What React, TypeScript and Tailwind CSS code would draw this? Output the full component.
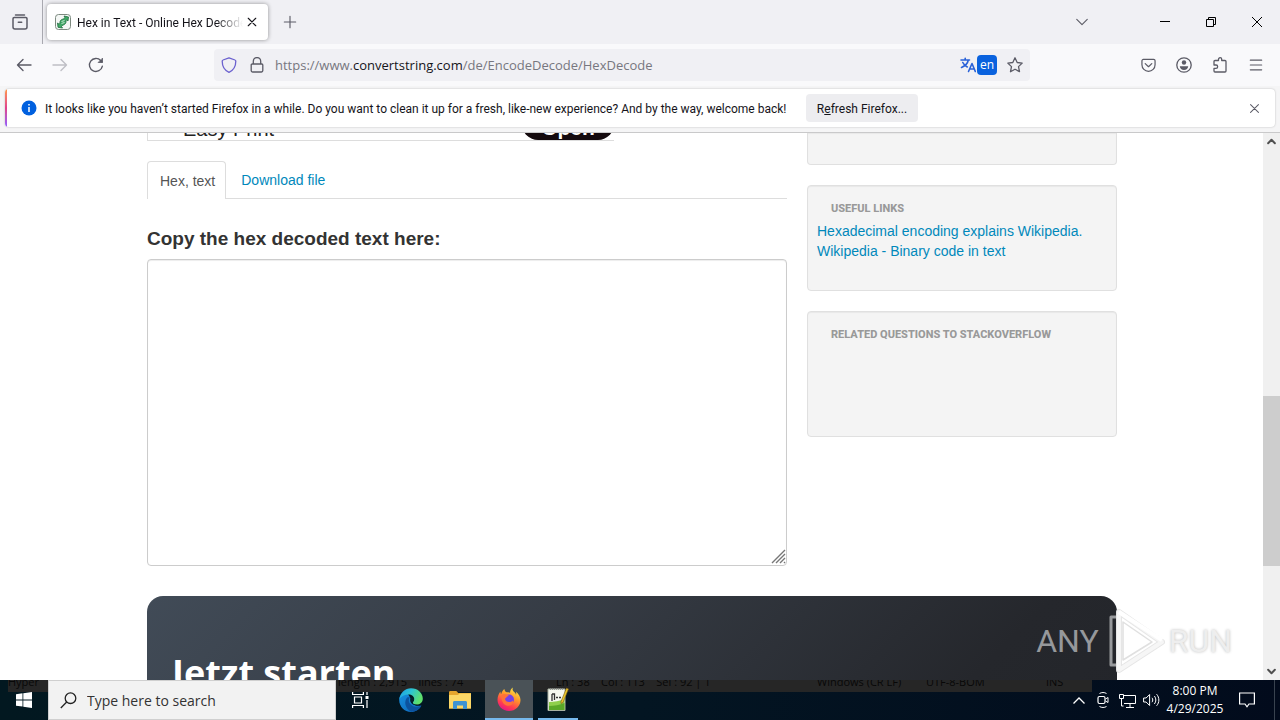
import type { ReactNode } from "react";

const links = [
  "Hexadecimal encoding explains Wikipedia.",
  "Wikipedia - Binary code in text",
];

function Stroke({ children, size = 16, width = 1.3, className = "" }: { children: ReactNode; size?: number; width?: number; className?: string }) {
  return (
    <svg width={size} height={size} viewBox="0 0 16 16" fill="none" stroke="currentColor" strokeWidth={width} strokeLinecap="round" strokeLinejoin="round" className={`shrink-0 ${className}`} aria-hidden="true">
      {children}
    </svg>
  );
}

function IconButton({ label, children, className = "" }: { label: string; children: ReactNode; className?: string }) {
  return (
    <button type="button" aria-label={label} className={`flex h-8 shrink-0 items-center justify-center ${className}`}>
      {children}
    </button>
  );
}

function TabStrip() {
  return (
    <div className="flex h-11 shrink-0 items-center bg-[#f0f0f4] text-[#5b5b66]">
      <IconButton label="Recent browsing" className="w-10">
        <Stroke size={16} width={1.500}>
          <path d="M3.500 1h9" />
          <path d="M2.200 3.500h11.600a1.200 1.200 0 0 1 1.200 1.200v8.300a2 2 0 0 1-2 2H3a2 2 0 0 1-2-2V4.700a1.200 1.200 0 0 1 1.200-1.200zM6.300 8.300h3.400" />
        </Stroke>
      </IconButton>
      <div className="ml-[2px] w-px self-stretch bg-[#a9a9b0]" />
      <div className="ml-1 flex h-9 w-[221px] items-center rounded bg-white px-2 text-[#15141a] shadow-[0_0_4px_rgba(0,0,0,0.4)]">
        <svg width="16" height="16" viewBox="0 0 16 16" className="shrink-0" aria-hidden="true">
          <rect x=".5" y=".5" width="15" height="15" rx="3" fill="#f4f7f5" stroke="#7d8a80" />
          <path d="M9 2l4.500 1-.5 4-1.300-1.200C10.500 7 11.500 8 10.500 9.500 9.500 11 8 10.500 6.500 12.500L7.500 14 3 13.300 2.500 9l1.600 1.200C5.500 9 4.500 8 5.500 6.500 6.500 5 8.500 5.500 10 3.700z" fill="#3fa866" stroke="#1e6b3c" strokeWidth=".8" />
          <path d="M6.500 7.500l3-1M6.500 9.500l3-1" stroke="#e4f3e9" strokeWidth=".8" />
        </svg>
        <span className="ml-[6px] w-[166px] overflow-hidden whitespace-nowrap pt-px font-['Roboto','Open_Sans',sans-serif] text-xs [mask-image:linear-gradient(to_right,black_84%,transparent)]">
          Hex in Text - Online Hex Decoder
        </span>
        <button type="button" aria-label="Close tab" className="ml-1 flex shrink-0 items-center">
          <Stroke size={10} width={1.800}><path d="M2 2l12 12M14 2L2 14" /></Stroke>
        </button>
      </div>
      <IconButton label="New tab" className="w-11">
        <Stroke size={14}><path d="M8 1.500v13M1.500 8h13" /></Stroke>
      </IconButton>
      <div className="flex-1" />
      <IconButton label="List all tabs" className="mr-[38px] w-11">
        <Stroke size={14}><path d="M2 5l6 6 6-6" /></Stroke>
      </IconButton>
      <div className="flex text-black">
        <IconButton label="Minimize" className="w-[46px]">
          <svg width="10" height="10" aria-hidden="true"><path d="M0 4.500h10" stroke="currentColor" /></svg>
        </IconButton>
        <IconButton label="Restore" className="w-[46px]">
          <svg width="10" height="10" fill="none" stroke="currentColor" aria-hidden="true"><path d="M.5 2.500h7v7h-7zM2.500 2.500v-2h7v7h-2" /></svg>
        </IconButton>
        <IconButton label="Close" className="w-[46px]">
          <svg width="10" height="10" fill="none" stroke="currentColor" aria-hidden="true"><path d="M0 0l10 10M10 0L0 10" /></svg>
        </IconButton>
      </div>
    </div>
  );
}

function NavBar() {
  return (
    <div className="flex h-[42px] shrink-0 items-center bg-[#f9f9fb] pl-[6px] text-[#5b5b66]">
      <IconButton label="Back" className="w-9"><Stroke width={1.400}><path d="M15 8H1.500M7 2.500L1.500 8 7 13.500" /></Stroke></IconButton>
      <IconButton label="Forward" className="w-9 text-[#bfbfc5]"><Stroke width={1.400}><path d="M1 8h13.500M9 2.500L14.500 8 9 13.500" /></Stroke></IconButton>
      <IconButton label="Reload" className="w-9">
        <Stroke width={1.400}><path d="M14.300 9.300A6.500 6.500 0 1 1 12.800 3.600L14 5" /><path d="M14.500 1.500v4h-4z" fill="currentColor" strokeWidth=".8" /></Stroke>
      </IconButton>
      <div className="ml-[100px] mr-[108px] flex h-8 min-w-0 flex-1 items-center rounded-sm bg-[#f0f0f4] pl-[7px]">
        <Stroke className="mr-3 text-[#6c62cf]"><path d="M8 .8l6 2.200c.6.200.8.500.8 1.100C14.800 9.500 12.500 13.500 8 15.300 3.500 13.500 1.200 9.500 1.200 4.100c0-.6.2-.9.800-1.100z" /></Stroke>
        <Stroke><path d="M4.300 7V4.200a3.700 3.700 0 0 1 7.400 0V7M3.200 7h9.600a1 1 0 0 1 1 1v5.500a1.500 1.500 0 0 1-1.500 1.500H3.700a1.500 1.500 0 0 1-1.500-1.500V8a1 1 0 0 1 1-1z" /></Stroke>
        <div className="ml-[10px] flex-1 whitespace-nowrap pt-px text-[13px] text-[#77777f]">
          https://www.<span className="text-[#15141a]">convertstring.com</span>/de/EncodeDecode/HexDecode
        </div>
        <button type="button" aria-label="Translate this page, English" className="mr-[10px] flex items-center">
          <Stroke className="text-[#2a62d8]" width={1.600}><path d="M1 3h8.500M5.200 1.200V3M8.300 3C7.800 6 5 9 1.500 10.500M2.800 5.500c1 2 2.500 3.500 4.500 4.500M8.500 14.500L12 6.500l3.300 8M9.800 12h4.400" /></Stroke>
          <span className="ml-px flex size-5 items-center justify-center rounded bg-[#0a62de] text-xs text-white">en</span>
        </button>
        <button type="button" aria-label="Bookmark this page" className="mr-[7px]">
          <Stroke className="block"><path d="M8 .8l2.200 4.700 5 .6-3.700 3.500 1 5.100L8 12.200l-4.500 2.500 1-5.100L.8 6.100l5-.6z" /></Stroke>
        </button>
      </div>
      <IconButton label="Pocket" className="w-5"><Stroke size={15}><path d="M2.500 1.500h11a1.500 1.500 0 0 1 1.500 1.500v4.200a7 7 0 0 1-14 0V3a1.500 1.500 0 0 1 1.500-1.500zM4.500 6L8 9.300 11.500 6" /></Stroke></IconButton>
      <IconButton label="Account" className="ml-4 w-5">
        <Stroke><circle cx="8" cy="8" r="7.200" /><circle cx="8" cy="5.500" r="2.200" fill="currentColor" stroke="none" /><path d="M3.800 9.300h8.400C12 11.500 10.500 13 8 13s-4-1.500-4.200-3.700z" fill="currentColor" stroke="none" /></Stroke>
      </IconButton>
      <IconButton label="Extensions" className="ml-4 w-5">
        <Stroke><path d="M2 7V4.500a1 1 0 0 1 1-1h3.500V2.300a1.600 1.600 0 0 1 3.200 0v1.200H13a1 1 0 0 1 1 1V14a1 1 0 0 1-1 1H3a1 1 0 0 1-1-1v-2.700h2a1.600 1.600 0 0 0 0-3.300H2z" /></Stroke>
      </IconButton>
      <IconButton label="Open menu" className="ml-4 mr-[14px] w-5"><Stroke size={14}><path d="M1.500 2.500h13M1.500 8h13M1.500 13.500h13" /></Stroke></IconButton>
    </div>
  );
}

function Notice() {
  return (
    <div className="shrink-0 border-b border-[#c9c9ca] bg-[#f5f5f6] px-[5px] pb-[5px] pt-[3px]">
      <div className="flex h-[38px] items-center overflow-hidden rounded bg-white font-['Roboto','Open_Sans',sans-serif] text-xs text-[#15141a] shadow-[0_0_2px_rgba(0,0,0,0.25)]">
        <div className="w-[2px] self-stretch bg-linear-to-b from-[#ff9640] via-[#e0408c] to-[#9059ff]" />
        <svg width="16" height="16" viewBox="0 0 16 16" className="ml-[14px] shrink-0" aria-hidden="true">
          <circle cx="8" cy="8" r="7.500" fill="#0060df" />
          <path d="M8 7v5M8 4v1.500" stroke="#fff" strokeWidth="1.500" />
        </svg>
        <p className="ml-2 w-[742px] whitespace-nowrap pt-px">
          It looks like you haven’t started Firefox in a while. Do you want to clean it up for a fresh, like-new experience? And by the way, welcome back!
        </p>
        <button type="button" className="ml-[19px] h-7 w-28 shrink-0 rounded bg-[#ededf0] pt-px">
          R<span className="underline">e</span>fresh Firefox...
        </button>
        <button type="button" aria-label="Dismiss" className="ml-auto mr-4 shrink-0 text-[#5b5b66]">
          <Stroke size={9} width={1.800}><path d="M1 1l14 14M15 1L1 15" /></Stroke>
        </button>
      </div>
    </div>
  );
}

function Card({ title, className, children }: { title?: string; className: string; children?: ReactNode }) {
  return (
    <section className={`rounded-sm border border-[#e0e0e0] bg-[#f4f4f4] px-[9px] shadow-[inset_0_1px_1px_rgba(0,0,0,0.05)] ${className}`}>
      {title && <h3 className="px-[14px] pt-[13px] font-['Roboto','Liberation_Sans',sans-serif] text-[11px] font-extrabold uppercase leading-5 text-[#999]">{title}</h3>}
      {children}
    </section>
  );
}

function PageContent() {
  return (
    <main className="min-w-0 flex-1 overflow-hidden bg-white pl-px font-['Liberation_Sans',Arial,sans-serif] text-sm leading-5 text-[#333]">
      <div className="mx-auto flex max-w-[970px] gap-5">
        <div className="min-w-0 flex-1">
          <div className="flex h-2 w-[467px] items-end justify-between overflow-hidden border-b border-l border-[#ddd] pl-[35px]">
            <span className="text-xl leading-[22px] text-[#222]">Easy Print</span>
            <a href="#open" className="flex h-9 w-[92px] shrink-0 items-end justify-center rounded-2xl bg-[#140a0e] text-[21px] font-bold leading-6 text-white">Open</a>
          </div>
          <nav className="mt-5 flex h-[38px] border-b border-[#ddd]">
            <a href="#text" className="-mb-px flex items-center rounded-t border border-b-0 border-[#ddd] bg-white pl-3 pr-[10px] text-[#555]">Hex, text</a>
            <a href="#file" className="ml-[2px] flex items-center px-[13px] text-[#0088bb]">Download file</a>
          </nav>
          <label htmlFor="decoded" className="mt-[30px] block text-[19px] font-bold leading-5">Copy the hex decoded text here:</label>
          <div className="relative mt-[10px]">
            <textarea id="decoded" className="block h-[307px] w-full resize-none rounded border border-[#ccc] bg-white shadow-[inset_0_1px_1px_rgba(0,0,0,0.075)]" />
            <svg width="15" height="15" className="absolute bottom-[2px] right-[1px]" stroke="#777" strokeWidth="1.400" aria-hidden="true">
              <path d="M1 14L14 1M5 14l9-9M9 14l5-5M13 14l1-1" />
            </svg>
          </div>
        </div>
        <aside className="w-[310px] shrink-0">
          <Card className="h-8 rounded-t-none border-t-0" />
          <Card title="Useful links" className="mt-5 h-[106px]">
            <ul className="pt-[2px]">
              {links.map((link) => (
                <li key={link}><a href="#wiki" className="whitespace-nowrap text-[#0088bb]">{link}</a></li>
              ))}
            </ul>
          </Card>
          <Card title="Related questions to StackOverflow" className="mt-5 h-[126px]" />
        </aside>
      </div>
      <section className="mx-auto mt-[30px] h-60 max-w-[970px] rounded-2xl px-[25px] pt-[52px] [background-image:linear-gradient(135deg,#414b57_0%,#363c45_35%,#25272c_75%,#222429_100%)]">
        <h2 className="font-['Open_Sans','Noto_Sans',sans-serif] text-4xl font-bold leading-[50px] text-white">Jetzt starten</h2>
      </section>
    </main>
  );
}

function ScrollBar() {
  return (
    <div className="flex w-[17px] shrink-0 flex-col items-center bg-[#f0f0f0] text-[#505050]">
      <div className="flex h-[17px] items-center"><Stroke size={9} width={3.500}><path d="M2 11l6-6 6 6" /></Stroke></div>
      <div className="flex-[247]" />
      <div className="w-full flex-[171] bg-[#cdcdcd]" />
      <div className="flex-[97]" />
      <div className="flex h-[17px] items-center"><Stroke size={9} width={3.500}><path d="M2 5l6 6 6-6" /></Stroke></div>
    </div>
  );
}

function Watermark() {
  return (
    <div className="pointer-events-none absolute bottom-[6px] right-12 flex items-center font-['Roboto','Liberation_Sans',sans-serif] text-[32px] leading-none">
      <span className="text-[#96989b]">ANY</span>
      <svg width="60" height="66" viewBox="0 0 60 66" fill="none" strokeLinejoin="round" className="ml-2 mr-[2px]" aria-hidden="true">
        <path d="M9 9H4v48h5" stroke="#97999c" strokeWidth="3" />
        <path d="M12 4v58l43-28z" stroke="#e6e6e6" strokeWidth="6" />
        <path d="M12 4v58l43-28z" stroke="#f6f6f6" strokeWidth="4" />
        <path d="M12 4l43 28" stroke="#fff" strokeWidth="4" />
        <path d="M16 14v38l29-18z" stroke="#e0e0e0" strokeWidth="1.500" />
      </svg>
      <span className="text-[#eeeeee] [text-shadow:0_0_3px_#bbb]">RUN</span>
    </div>
  );
}

function TaskBar() {
  return (
    <footer className="relative flex h-10 shrink-0 overflow-hidden bg-linear-to-r from-[#021820] via-[#031522] to-[#020b1c] text-white">
      <div className="absolute left-2 top-0 h-3 w-[1084px] overflow-hidden bg-[#262626] text-[11px] leading-3 text-[#080808]">
        <div className="-mt-1 flex whitespace-pre">
          <span className="w-[330px]">Hyper</span>
          <span className="w-[218px]">length : 2,915    lines : 74</span>
          <span className="w-[261px]">Ln : 38    Col : 113    Sel : 92 | 1</span>
          <span className="w-[109px]">Windows (CR LF)</span>
          <span className="w-[120px]">UTF-8-BOM</span>
          <span>INS</span>
        </div>
      </div>
      <button type="button" aria-label="Start" className="relative flex w-12 items-center justify-center">
        <svg width="16" height="16" fill="#fff" aria-hidden="true"><path d="M0 2.200l6.500-.9v6.200H0zM7.300 1.200L16 0v7.500H7.300zM0 8.400h6.500v6.200L0 13.700zM7.300 8.400H16V16l-8.700-1.200z" /></svg>
      </button>
      <label className="relative flex w-72 items-center border border-[#cfcfcf] bg-[#f2f2f2] pl-[11px] text-[#333]">
        <svg width="17" height="17" viewBox="0 0 17 17" fill="none" stroke="#222" strokeWidth="1.300" className="shrink-0" aria-hidden="true"><circle cx="10.500" cy="6.200" r="5.300" /><path d="M6.700 10L.8 16" /></svg>
        <input type="text" aria-label="Type here to search" placeholder="Type here to search" className="ml-[10px] w-full bg-transparent pt-[2px] text-sm outline-none placeholder:text-[#333]" />
      </label>
      <button type="button" aria-label="Task view" className="relative flex w-12 items-center justify-center">
        <svg width="17" height="16" fill="none" stroke="#fff" strokeWidth="1.200" aria-hidden="true"><path d="M.6 0v2.500h10.800V0M2.500 5h7v6h-7zM.6 16v-2.500h10.800V16M15 0v3M15 8v8" /><path d="M13.500 4h3v3h-3z" fill="#fff" stroke="none" /></svg>
      </button>
      <button type="button" aria-label="Edge" className="relative ml-[2px] flex w-[50px] items-center justify-center">
        <svg width="24" height="24" viewBox="0 0 24 24" aria-hidden="true">
          <defs>
            <linearGradient id="edgeTop" x1="0" y1="0" x2="1" y2=".4"><stop offset="0" stopColor="#1c9be6" /><stop offset=".5" stopColor="#2cc3d4" /><stop offset="1" stopColor="#5fe06b" /></linearGradient>
            <linearGradient id="edgeBody" x1="0" y1="0" x2="1" y2="1"><stop offset="0" stopColor="#1690e0" /><stop offset="1" stopColor="#0d62b4" /></linearGradient>
          </defs>
          <path d="M.2 12C.2 8 3 4 9 6l3 5c-1 4 4 8 10.200 6.500C20.500 21.500 16.500 24 12 24 5.500 24 .2 18.500.2 12z" fill="url(#edgeBody)" />
          <path d="M.3 11C1.500 4.500 6 .2 12 .2c7 0 11.800 5 11.800 10.300 0 4-3 6-6 6-2.500 0-4-.8-4-1.800s1.400-1.500 1.400-3.700c0-2.700-2.500-4.500-5.500-4.500-4 0-7.700 2-9.400 4.500z" fill="url(#edgeTop)" />
          <path d="M8.500 9.200c-4 3.800-2.500 11.500 3.800 14.500 4.500 0 8.500-2.700 10.200-6.200-3.700 2.300-8.500 1.600-11-1.200-1.800-2-2.500-4.700-.4-7.100z" fill="#0c529e" />
          <path d="M11.500 10c-1 2.500 0 5 2 6.300s5 1.500 7.500.5c-4 .4-7.300-.6-7.300-2.100 0-1 1.400-1.500 1.400-3.200 0-1.500-2.300-3-3.600-1.500z" fill="#03202c" />
        </svg>
      </button>
      <button type="button" aria-label="File Explorer" className="relative flex w-12 items-center justify-center">
        <svg width="22" height="18" viewBox="0 0 22 18" aria-hidden="true">
          <path d="M0 1.500C0 .7.500 0 1.300 0h6l2 2H22v15.500H0z" fill="#e5a52d" />
          <path d="M0 4h9l1.500-1.500H22v15H0z" fill="#fbd766" />
          <path d="M4 18v-6.500c0-1 .7-1.500 1.500-1.500h11c.8 0 1.500.5 1.500 1.500V18h-4v-3.500H8V18z" fill="#3d93d2" />
        </svg>
      </button>
      <button type="button" aria-label="Firefox" className="relative ml-px flex w-12 items-center justify-center border-b-2 border-[#76b9ed] bg-[#4a5257]">
        <svg width="24" height="24" viewBox="0 0 24 24" aria-hidden="true">
          <defs>
            <linearGradient id="flame" x1=".8" y1="0" x2=".3" y2="1"><stop offset="0" stopColor="#fff14a" /><stop offset=".4" stopColor="#ff9a2a" /><stop offset=".75" stopColor="#ff3c50" /><stop offset="1" stopColor="#e31587" /></linearGradient>
          </defs>
          <path d="M16 .5c-1 2-.3 3.200 1.500 4.700 1 .8 1.300 1.800 1.500 2.500.3-.7.3-2 0-3 2.700 2 4.500 5 4.500 8.300C23.500 19 18.500 24 12 24S.5 19 .5 12.800c0-3.500 1.500-6.500 3-8.300-.1 1.500.2 2 .7 2.500C5 4.500 6 3 7.500 2c-.1 1.500 1 3 2.500 3.300 2 0 2.800.2 3 .7C13 3.500 14 1.500 16 .5z" fill="url(#flame)" />
          <circle cx="12" cy="12.500" r="5" fill="#7542e5" />
          <path d="M4.500 8c3-2 6-.5 7.500 1-2.500 0-2.500 2-4 2.500 0 3.500 5 5 8 2 1 4-3 6-6.500 5S4 13 4.500 8z" fill="#ff7139" />
        </svg>
      </button>
      <button type="button" aria-label="Notepad++" className="relative ml-[5px] flex w-10 items-center justify-center border-b-2 border-[#76b9ed]">
        <svg width="22" height="24" viewBox="0 0 22 24" aria-hidden="true">
          <path d="M1 2h17v21.500H1z" fill="#f5f8ef" stroke="#a8b1a2" />
          <path d="M2 15c5 0 11-1 15.500-3v11H2z" fill="#8fcf4c" />
          <path d="M2 19c5 0 11-1 15.500-3v7H2z" fill="#5aa828" />
          <path d="M3 2h14" stroke="#888" strokeWidth="1.500" strokeDasharray="1 1" />
          <path d="M5 7v7M5 7h2.500v6" stroke="#333" strokeWidth="1.300" fill="none" />
          <path d="M9 10.500h2M12 10.500h2" stroke="#333" strokeWidth="1.600" />
          <path d="M14 14.500L19.500 1l2 1L16 15.500l-2 1z" fill="#e9c72c" stroke="#7a5a18" strokeWidth=".6" />
        </svg>
      </button>
      <div className="relative ml-auto flex items-center">
        <button type="button" aria-label="Show hidden icons" className="mr-3"><svg width="12" height="7" fill="none" stroke="#fff" strokeWidth="1.300" className="block" aria-hidden="true"><path d="M.5 6.500L6 1l5.500 5.500" /></svg></button>
        <svg width="12" height="16" viewBox="0 0 12 16" fill="none" stroke="#fff" className="mr-[10px]" aria-hidden="true"><path d="M2.500 1.500c2-1.300 5-1.300 7 0M2.500 14.500c2 1.300 5 1.300 7 0" strokeWidth="1" /><rect x="1" y="4.500" width="7" height="7" rx="1.500" strokeWidth="1.200" /><path d="M8.500 7l2.500-1.500v5L8.500 9" /></svg>
        <svg width="17" height="15" viewBox="0 0 17 15" fill="none" stroke="#fff" className="mr-[7px]" aria-hidden="true"><path d="M5 2.500h11.500v8H5M.5 1.500h4v4h-4zM2.500 5.500v7.500h2M11 10.500V14M7 14.500h8" /></svg>
        <svg width="17" height="14" viewBox="0 0 17 14" fill="none" stroke="#fff" aria-hidden="true"><path d="M.6 5h2.500l3.500-3.500v11L3.100 9H.6zM9 4.800c1 1.300 1 3.100 0 4.400M11.300 3c2 2.300 2 5.700 0 8M13.600 1.200c3 3.400 3 8.200 0 11.600" /></svg>
        <div className="ml-[5px] w-[60px] text-center text-xs leading-[18px]"><div>8:00 PM</div><div>4/29/2025</div></div>
        <button type="button" aria-label="Notifications" className="ml-[14px] mr-[19px]"><svg width="16" height="16" fill="none" stroke="#fff" strokeWidth="1.200" className="block" aria-hidden="true"><path d="M.6 1h14.800v11H10l-2 2.800L6 12H.6z" /></svg></button>
        <div className="mr-[5px] h-10 w-px bg-[#39434f]" />
      </div>
    </footer>
  );
}

export default function App() {
  return (
    <div className="flex h-screen flex-col overflow-hidden bg-white font-['Open_Sans','Noto_Sans',sans-serif]">
      <TabStrip />
      <NavBar />
      <Notice />
      <div className="relative flex min-h-0 flex-1">
        <PageContent />
        <ScrollBar />
        <Watermark />
      </div>
      <TaskBar />
    </div>
  );
}
